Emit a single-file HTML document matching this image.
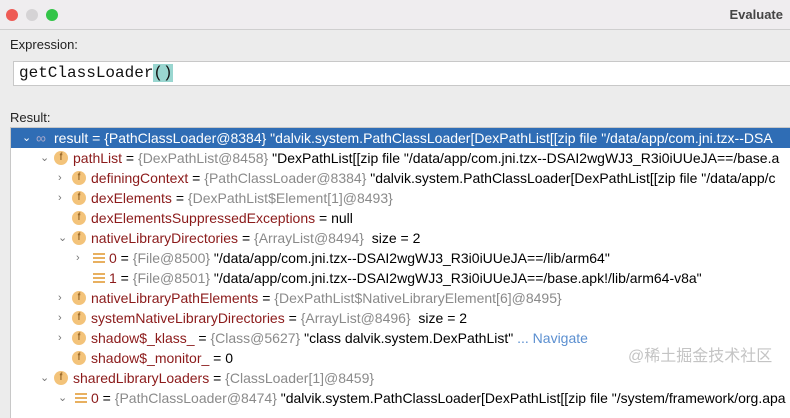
<!DOCTYPE html>
<html><head><style>
body{margin:0;width:790px;height:404px;overflow:hidden;background:#ececec;font-family:"Liberation Sans","Noto Sans CJK SC",sans-serif;position:relative}
.title{position:absolute;left:0;top:0;width:790px;height:29px;background:#efedef;border-bottom:1px solid #cfcfcf}
.dot{position:absolute;top:9px;width:12px;height:12px;border-radius:50%}
.abs{position:absolute;white-space:nowrap}
.tree{position:absolute;left:10px;top:127px;width:790px;height:290px;background:#fff;border-left:1px solid #c8c8c8;border-top:1px solid #c8c8c8}
.row{position:absolute;left:0;height:20px;width:800px;font-size:14px;line-height:20px;white-space:nowrap;color:#000}
.n{color:#8b1a1a}.g{color:#8a8a8a}
.arr{position:absolute;top:0;color:#777;font-size:11px}
.f{position:absolute;top:3px;width:14px;height:14px;border-radius:50%;background:#f3c37a;color:#7a4a10;font-size:10px;line-height:14px;text-align:center}
.bars{position:absolute;top:5px;width:12px;height:10px;background:repeating-linear-gradient(#e8b060 0 2px,transparent 2px 4px)}
</style></head><body>
<div class="title">
<div class="dot" style="left:6px;background:#ee5b55"></div>
<div class="dot" style="left:26px;background:#d5d3d5"></div>
<div class="dot" style="left:46px;background:#33c448"></div>
<div class="abs" style="right:7px;top:7px;font-size:13px;font-weight:bold;color:#444">Evaluate</div>
</div>
<div class="abs" style="left:10px;top:37px;font-size:13px;color:#222">Expression:</div>
<div class="abs" style="left:13px;top:61px;width:777px;height:23px;background:#fff;border-top:1px solid #c8c8c8;border-bottom:1px solid #c8c8c8;border-left:1px solid #c8c8c8"></div>
<div class="abs" style="left:19px;top:63px;font-family:'Liberation Mono',monospace;font-size:16px;line-height:20px;color:#111">getClassLoader<span style="background:#99d6d0">()</span></div>
<div class="abs" style="left:10px;top:110px;font-size:13px;color:#222">Result:</div>
<div class="tree">
<div class="row" style="top:0;background:#2f6db5;color:#fff"><span class="arr" style="left:11px;color:#fff">&#8964;</span><span style="position:absolute;left:25px;color:#aac">&#8734;</span><span style="position:absolute;left:43px">result = {PathClassLoader@8384} "dalvik.system.PathClassLoader[DexPathList[[zip file "/data/app/com.jni.tzx--DSA</span></div>
<div class="row" style="top:20px"><span class="arr" style="left:29px">&#8964;</span><span class="f" style="left:43px">f</span><span style="position:absolute;left:62px"><span class="n">pathList</span> = <span class="g">{DexPathList@8458}</span> "DexPathList[[zip file "/data/app/com.jni.tzx--DSAI2wgWJ3_R3i0iUUeJA==/base.a</span></div>
<div class="row" style="top:40px"><span class="arr" style="left:47px">&#8250;</span><span class="f" style="left:61px">f</span><span style="position:absolute;left:80px"><span class="n">definingContext</span> = <span class="g">{PathClassLoader@8384}</span> "dalvik.system.PathClassLoader[DexPathList[[zip file "/data/app/c</span></div>
<div class="row" style="top:60px"><span class="arr" style="left:47px">&#8250;</span><span class="f" style="left:61px">f</span><span style="position:absolute;left:80px"><span class="n">dexElements</span> = <span class="g">{DexPathList$Element[1]@8493}</span></span></div>
<div class="row" style="top:80px"><span class="f" style="left:61px">f</span><span style="position:absolute;left:80px"><span class="n">dexElementsSuppressedExceptions</span> = null</span></div>
<div class="row" style="top:100px"><span class="arr" style="left:47px">&#8964;</span><span class="f" style="left:61px">f</span><span style="position:absolute;left:80px"><span class="n">nativeLibraryDirectories</span> = <span class="g">{ArrayList@8494}</span>&nbsp; size = 2</span></div>
<div class="row" style="top:120px"><span class="arr" style="left:65px">&#8250;</span><span class="bars" style="left:82px"></span><span style="position:absolute;left:98px"><span class="n">0</span> = <span class="g">{File@8500}</span> "/data/app/com.jni.tzx--DSAI2wgWJ3_R3i0iUUeJA==/lib/arm64"</span></div>
<div class="row" style="top:140px"><span class="bars" style="left:82px"></span><span style="position:absolute;left:98px"><span class="n">1</span> = <span class="g">{File@8501}</span> "/data/app/com.jni.tzx--DSAI2wgWJ3_R3i0iUUeJA==/base.apk!/lib/arm64-v8a"</span></div>
<div class="row" style="top:160px"><span class="arr" style="left:47px">&#8250;</span><span class="f" style="left:61px">f</span><span style="position:absolute;left:80px"><span class="n">nativeLibraryPathElements</span> = <span class="g">{DexPathList$NativeLibraryElement[6]@8495}</span></span></div>
<div class="row" style="top:180px"><span class="arr" style="left:47px">&#8250;</span><span class="f" style="left:61px">f</span><span style="position:absolute;left:80px"><span class="n">systemNativeLibraryDirectories</span> = <span class="g">{ArrayList@8496}</span>&nbsp; size = 2</span></div>
<div class="row" style="top:200px"><span class="arr" style="left:47px">&#8250;</span><span class="f" style="left:61px">f</span><span style="position:absolute;left:80px"><span class="n">shadow$_klass_</span> = <span class="g">{Class@5627}</span> "class dalvik.system.DexPathList" <span style="color:#5b8fd0">... Navigate</span></span></div>
<div class="row" style="top:220px"><span class="f" style="left:61px">f</span><span style="position:absolute;left:80px"><span class="n">shadow$_monitor_</span> = 0</span></div>
<div class="row" style="top:240px"><span class="arr" style="left:29px">&#8964;</span><span class="f" style="left:43px">f</span><span style="position:absolute;left:62px"><span class="n">sharedLibraryLoaders</span> = <span class="g">{ClassLoader[1]@8459}</span></span></div>
<div class="row" style="top:260px"><span class="arr" style="left:47px">&#8964;</span><span class="bars" style="left:64px"></span><span style="position:absolute;left:80px"><span class="n">0</span> = <span class="g">{PathClassLoader@8474}</span> "dalvik.system.PathClassLoader[DexPathList[[zip file "/system/framework/org.apa</span></div>
</div>
<div class="abs" style="left:628px;top:342px;font-size:16px;color:#c4c4c4">@稀土掘金技术社区</div>
</body></html>
